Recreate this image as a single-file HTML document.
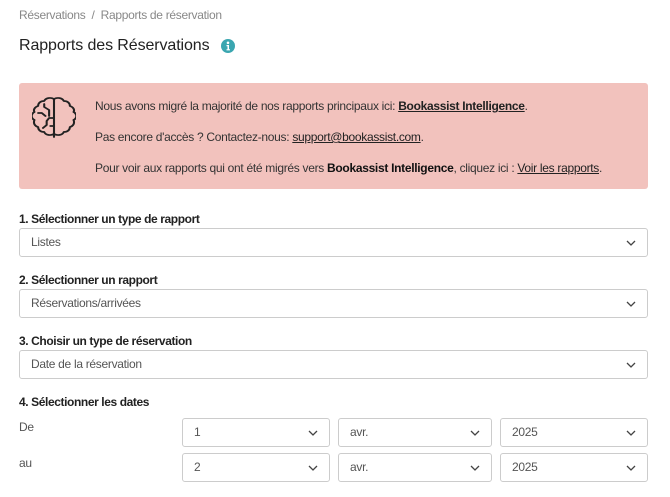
<!DOCTYPE html>
<html><head><meta charset="utf-8"><style>
*{box-sizing:border-box;margin:0;padding:0}
body{width:670px;height:497px;background:#fff;font-family:"Liberation Sans",sans-serif;color:#333;position:relative;overflow:hidden}
.a{position:absolute;white-space:nowrap}
.bc{left:19px;top:8px;font-size:12px;color:#888;letter-spacing:-0.3px}
.h{left:19px;top:37px;font-size:16px;color:#222;letter-spacing:-0.1px}
.alert{position:absolute;left:19px;top:83px;width:629px;height:106px;background:#f2c2bd;border-radius:3px}
.t{font-size:12px;color:#333;letter-spacing:-0.3px}
.t b{color:#111}
.t u{color:#222}
.lab{font-size:12px;font-weight:bold;color:#222;letter-spacing:-0.4px}
.sel{position:absolute;border:1px solid #ccc;border-radius:3px;background:#fff;font-size:12px;color:#555;padding-left:11px;letter-spacing:-0.3px}
.sel svg{position:absolute;right:11px;top:50%;margin-top:-3px}
</style></head><body>
<div class="a bc">Réservations &nbsp;/ &nbsp;Rapports de réservation</div>
<div class="a h">Rapports des Réservations</div>
<svg class="a" style="left:221px;top:39px" width="14" height="14" viewBox="0 0 14 14"><circle cx="7" cy="7" r="7" fill="#3aa6b0"/><circle cx="7" cy="3.8" r="1.3" fill="#fff"/><path d="M5.5 6h2.5v4.2h1v1.2h-3.5v-1.2h1v-3h-1z" fill="#fff"/></svg>
<div class="alert"></div>
<svg class="a" style="left:32px;top:96px" width="44" height="44" viewBox="3 0 36 44" preserveAspectRatio="none" fill="none" stroke="#222" stroke-width="1.7" stroke-linejoin="round" stroke-linecap="round">
<path d="M21 3v38M21 3c-3-2-7-1-8 2-3 0-5 2-5 5-3 1-4 4-3 6-3 2-3 6 0 8-1 3 0 6 3 7 0 3 2 5 5 5 1 3 5 4 8 2"/>
<path d="M21 3c3-2 7-1 8 2 3 0 5 2 5 5 3 1 4 4 3 6 3 2 3 6 0 8 1 3 0 6-3 7 0 3-2 5-5 5-1 3-5 4-8 2"/>
<path d="M13 8v3l4 3v6M8 17h3l3 3M21 22h-4l-2 3v4M15 29l-3 3M21 30h-3"/>
</svg>
<div class="a t" style="left:95px;top:99px">Nous avons migré la majorité de nos rapports principaux ici: <b><u>Bookassist Intelligence</u></b>.</div>
<div class="a t" style="left:95px;top:130px">Pas encore d'accès ? Contactez-nous: <u>support@bookassist.com</u>.</div>
<div class="a t" style="left:95px;top:161px">Pour voir aux rapports qui ont été migrés vers <b>Bookassist Intelligence</b>, cliquez ici : <u>Voir les rapports</u>.</div>

<div class="a lab" style="left:19px;top:212px">1. Sélectionner un type de rapport</div>
<div class="sel" style="left:19px;top:228px;width:629px;height:29px;line-height:27px">Listes<svg width="10" height="6"><path d="M1 1l4 4 4-4" stroke="#444" stroke-width="1.3" fill="none"/></svg></div>
<div class="a lab" style="left:19px;top:273px">2. Sélectionner un rapport</div>
<div class="sel" style="left:19px;top:289px;width:629px;height:29px;line-height:27px">Réservations/arrivées<svg width="10" height="6"><path d="M1 1l4 4 4-4" stroke="#444" stroke-width="1.3" fill="none"/></svg></div>
<div class="a lab" style="left:19px;top:334px">3. Choisir un type de réservation</div>
<div class="sel" style="left:19px;top:350px;width:629px;height:29px;line-height:27px">Date de la réservation<svg width="10" height="6"><path d="M1 1l4 4 4-4" stroke="#444" stroke-width="1.3" fill="none"/></svg></div>
<div class="a lab" style="left:19px;top:395px">4. Sélectionner les dates</div>
<div class="a t" style="left:19px;top:420px;color:#555">De</div>
<div class="a t" style="left:19px;top:456px;color:#555">au</div>
<div class="sel" style="left:182px;top:418px;width:148px;height:29px;line-height:27px">1<svg width="10" height="6"><path d="M1 1l4 4 4-4" stroke="#444" stroke-width="1.3" fill="none"/></svg></div>
<div class="sel" style="left:338px;top:418px;width:154px;height:29px;line-height:27px">avr.<svg width="10" height="6"><path d="M1 1l4 4 4-4" stroke="#444" stroke-width="1.3" fill="none"/></svg></div>
<div class="sel" style="left:500px;top:418px;width:148px;height:29px;line-height:27px">2025<svg width="10" height="6"><path d="M1 1l4 4 4-4" stroke="#444" stroke-width="1.3" fill="none"/></svg></div>
<div class="sel" style="left:182px;top:453px;width:148px;height:29px;line-height:27px">2<svg width="10" height="6"><path d="M1 1l4 4 4-4" stroke="#444" stroke-width="1.3" fill="none"/></svg></div>
<div class="sel" style="left:338px;top:453px;width:154px;height:29px;line-height:27px">avr.<svg width="10" height="6"><path d="M1 1l4 4 4-4" stroke="#444" stroke-width="1.3" fill="none"/></svg></div>
<div class="sel" style="left:500px;top:453px;width:148px;height:29px;line-height:27px">2025<svg width="10" height="6"><path d="M1 1l4 4 4-4" stroke="#444" stroke-width="1.3" fill="none"/></svg></div>
</body></html>
